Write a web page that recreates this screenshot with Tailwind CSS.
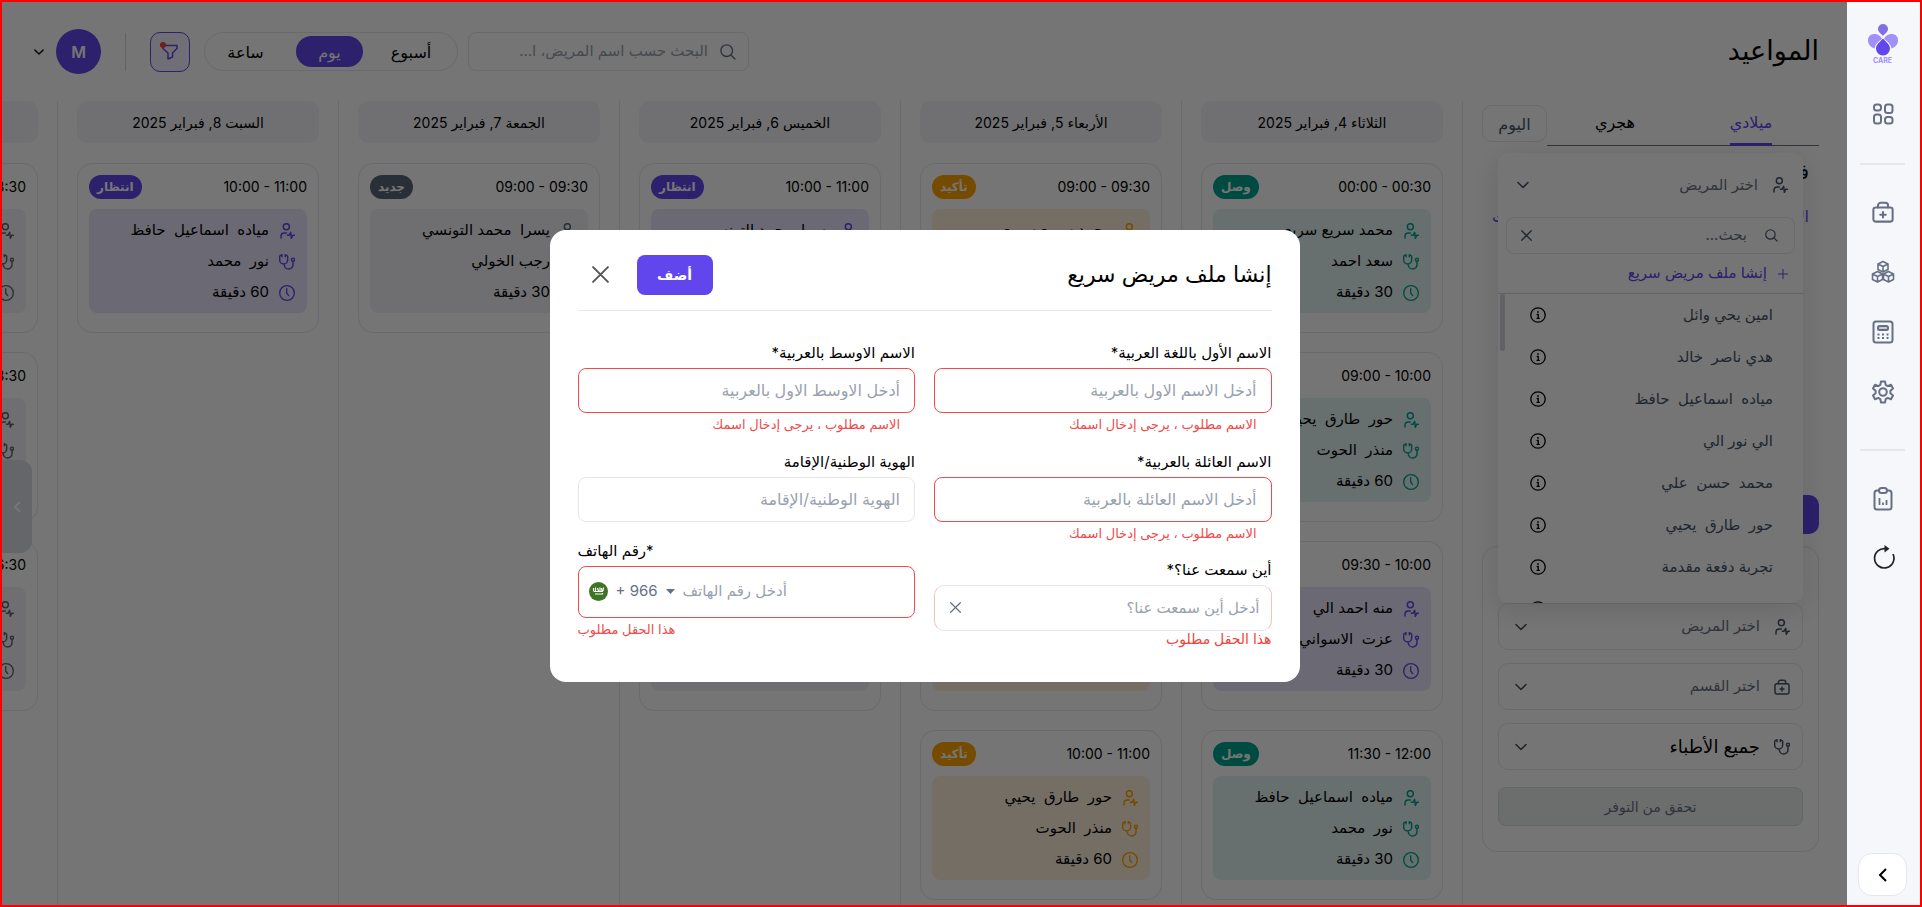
<!DOCTYPE html>
<html lang="ar" dir="rtl">
<head>
    <meta charset="UTF-8">
    <meta name="viewport" content="width=device-width, initial-scale=1.0">
    <title>المواعيد - CARE</title>
    <script src="https://cdn.jsdelivr.net/npm/@tailwindcss/browser@4"></script>
</head>
<body class="font-[Inter,'DejaVu_Sans',sans-serif] text-black">

    <!-- Icons -->
    <svg class="hidden">
        <symbol id="patient" viewBox="0 0 24 24" fill="none" stroke="currentColor" stroke-width="2.200" stroke-linecap="round" stroke-linejoin="round">
            <circle cx="11" cy="5.500" r="4.500"/><path d="M3 22.500V20a5 5 0 0 1 5-5h3"/><path d="M12.500 18.500h2.500l2.500-4.500 1 9 2-4.500H23"/>
        </symbol>
        <symbol id="doctor" viewBox="0 0 24 24" fill="none" stroke="currentColor" stroke-width="2.200" stroke-linecap="round" stroke-linejoin="round">
            <path d="M4.500 2H3a2 2 0 0 0-2 2v5a6 6 0 0 0 12 0V4a2 2 0 0 0-2-2H9.500M4.500 1v3M9.500 1v3M8 15v1a6.500 6.500 0 0 0 13 0v-4.500"/><circle cx="21" cy="8.500" r="2.300"/>
        </symbol>
        <symbol id="clock" viewBox="0 0 24 24" fill="none" stroke="currentColor" stroke-width="2" stroke-linecap="round" stroke-linejoin="round">
            <circle cx="12" cy="12" r="11"/><path d="M11.500 5.500V12l3 4"/>
        </symbol>
        <symbol id="bag" viewBox="0 0 24 24" fill="none" stroke="currentColor" stroke-width="2.200" stroke-linecap="round" stroke-linejoin="round">
            <rect x="1.500" y="7" width="21" height="15.500" rx="2.500"/><path d="M6.500 7V5a3 3 0 0 1 3-3h5a3 3 0 0 1 3 3v2M12 12v6M9 15h6"/>
        </symbol>
        <symbol id="chevron" viewBox="0 0 12 12" fill="none" stroke="currentColor" stroke-width="1.600" stroke-linecap="round" stroke-linejoin="round">
            <path d="M1 3.500l5 5 5-5"/>
        </symbol>
        <symbol id="search" viewBox="0 0 16 16" fill="none" stroke="currentColor" stroke-width="1.400" stroke-linecap="round">
            <circle cx="6.700" cy="6.700" r="5.800"/><path d="M10.900 10.900L15 15"/>
        </symbol>
        <symbol id="close" viewBox="0 0 16 16" fill="none" stroke="currentColor" stroke-width="1.800" stroke-linecap="round">
            <path d="M1 1l14 14M15 1L1 15"/>
        </symbol>
        <symbol id="info" viewBox="0 0 16 16" fill="none" stroke="currentColor" stroke-width="1.300" stroke-linecap="round">
            <circle cx="8" cy="8" r="7.200"/><path d="M7.200 7.500h1v3.700M7 11.300h2.300"/><circle cx="8" cy="4.900" r=".3" fill="currentColor"/>
        </symbol>
    </svg>

    <div class="flex h-screen overflow-hidden border-2 border-[#ff0000] bg-white">

        <!-- Sidebar -->
        <aside class="flex w-[73px] shrink-0 flex-col items-center bg-[#f6f7fb] pr-[2px] text-[#667085]">
            <a href="#" aria-label="CARE" class="mt-[22px] flex flex-col items-center">
                <svg class="h-8 w-[30px]" viewBox="0 0 30 32">
                    <path d="M14 15C11.500 8.500 0 8 0 16.500c0 4.500 3.500 7 6.500 8C7 20.500 10 17.500 14 15z" fill="#a18ffb"/>
                    <path d="M16 15c2.500-6.500 14-7 14 1.500 0 4.500-3.500 7-6.500 8C23 20.500 20 17.500 16 15z" fill="#a18ffb"/>
                    <path d="M15 12c-2-2.500-5-4-5-7a5 5 0 0 1 10 0c0 3-3 4.500-5 7z" fill="#8270e2"/>
                    <path d="M15 14.500c-3 3.500-7 6-7 10a7 7 0 0 0 14 0c0-4-4-6.500-7-10z" fill="#6246ed"/>
                </svg>
                <span class="text-[7px] leading-[9px] font-bold text-[#a18ffb]">CARE</span>
            </a>
            <nav class="mt-[37px] flex flex-col items-center" aria-label="القائمة">
                <a href="#" aria-label="الرئيسية">
                    <svg class="size-6" viewBox="0 0 24 24" fill="none" stroke="currentColor" stroke-width="2"><rect x="3" y="2.500" width="7" height="6" rx="2.500"/><rect x="14" y="2.500" width="7.500" height="8.500" rx="2.500"/><rect x="3" y="12.500" width="7" height="9" rx="2.500"/><rect x="14" y="15" width="7.500" height="6.500" rx="2.500"/></svg>
                </a>
                <hr class="mt-[37px] mb-9 w-[45px] border-t-2 border-gray-200">
                <a href="#" aria-label="العيادات"><svg class="size-[22px]"><use href="#bag"/></svg></a>
                <a href="#" aria-label="المخزون" class="mt-[37px]">
                    <svg class="size-6" viewBox="0 0 24 24" fill="none" stroke="currentColor" stroke-width="1.600" stroke-linejoin="round"><path d="M12 1.500l5 2.500v5.500l-5 2.500-5-2.500V4zM7 4l5 2.500L17 4M12 6.500V12M6.500 11.500l5 2.500v5.500l-5 2.500-5-2.500V14zM1.500 14l5 2.500 5-2.500M6.500 16.500V22M17.500 11.500l5 2.500v5.500l-5 2.500-5-2.500V14zM12.500 14l5 2.500 5-2.500M17.500 16.500V22"/></svg>
                </a>
                <a href="#" aria-label="المحاسبة" class="mt-9">
                    <svg class="size-6" viewBox="0 0 24 24" fill="none" stroke="currentColor" stroke-width="2"><rect x="2.500" y="1.500" width="19" height="21" rx="2.500"/><rect x="7" y="6" width="10" height="4" rx="1.500" fill="#c3c8d2"/><path d="M6.500 14.500h2M11 14.500h2M15.500 14.500h2M6.500 18h2M11 18h2M15.500 18h2"/></svg>
                </a>
                <a href="#" aria-label="الإعدادات" class="mt-9">
                    <svg class="size-6" viewBox="0 0 24 24" fill="none" stroke="currentColor" stroke-width="2" stroke-linejoin="round"><path d="M10 1.500h4l.7 3.400 2 1.200 3.300-1.300 2 3.600-2.600 2.300v2.600l2.600 2.300-2 3.600-3.300-1.300-2 1.200-.7 3.400h-4l-.7-3.400-2-1.200L4 19.200l-2-3.600 2.600-2.300v-2.600L2 8.400l2-3.600 3.300 1.300 2-1.200z"/><circle cx="12" cy="12" r="3.800"/></svg>
                </a>
                <hr class="mt-[45px] mb-9 w-[45px] border-t-2 border-gray-200">
                <a href="#" aria-label="التقارير">
                    <svg class="size-6" viewBox="0 0 24 24" fill="none" stroke="currentColor" stroke-width="2" stroke-linejoin="round"><path d="M8 3.500H6a2.500 2.500 0 0 0-2.500 2.500v14A2.500 2.500 0 0 0 6 22.500h12a2.500 2.500 0 0 0 2.500-2.500V6A2.500 2.500 0 0 0 18 3.500h-2"/><rect x="8" y="1" width="8" height="5" rx="2.500"/><path d="M8.500 11v7M12 15.500V18M15.500 13v5" stroke-width="1.800"/></svg>
                </a>
                <button type="button" aria-label="تحديث" class="mt-[34px] text-[#222]">
                    <svg class="size-6" viewBox="0 0 24 24" fill="none" stroke="currentColor" stroke-width="1.700"><path d="M15 3.700A9.700 9.700 0 1 0 22 9"/><path d="M13.500 0l5 3.700-5 3.800z" fill="currentColor" stroke="none"/></svg>
                </button>
            </nav>
            <button type="button" aria-label="توسيع القائمة" class="mt-auto mb-[9px] flex h-[43px] w-[49px] items-center justify-center rounded-[14px] border border-gray-200 bg-white text-black">
                <svg class="size-4" viewBox="0 0 16 16" fill="none" stroke="currentColor" stroke-width="2"><path d="M11 2L5 8l6 6"/></svg>
            </button>
        </aside>

        <main class="relative flex min-w-0 flex-1 flex-col overflow-hidden">

            <!-- Header -->
            <header class="flex h-[99px] shrink-0 items-center justify-between ps-7 pe-8">
                <h1 class="text-[27px]">المواعيد</h1>
                <div class="flex items-center">
                    <label class="flex h-[39px] w-[281px] items-center gap-3 rounded-lg border border-gray-200 px-3 text-[#667085]">
                        <svg class="size-4 shrink-0"><use href="#search"/></svg>
                        <input type="search" aria-label="بحث" placeholder="البحث حسب اسم المريض، اسم الطبيب" class="w-[212px] text-[15px] text-ellipsis outline-none placeholder:text-gray-400">
                    </label>
                    <div class="ms-[10px] flex h-[39px] w-[254px] items-center gap-[6px] rounded-full border border-gray-200 px-1 text-base">
                        <button type="button" class="w-[84px]">أسبوع</button>
                        <button type="button" class="h-[31px] w-[67px] rounded-full bg-[#6246ed] font-medium text-white">يوم</button>
                        <button type="button" class="flex-1 ps-2">ساعة</button>
                    </div>
                    <button type="button" aria-label="تصفية" class="relative ms-[14px] flex size-10 items-center justify-center rounded-[10px] border border-[#6246ed] bg-[#f4f2ff] text-[#6246ed]">
                        <svg class="size-4" viewBox="0 0 16 16" fill="none" stroke="currentColor" stroke-width="1.500" stroke-linejoin="round"><path d="M1 1.500h14v3L10.500 9v4L6 15V9L1 4.500z"/></svg>
                        <span class="absolute top-[9px] left-[9px] size-[6px] rounded-full bg-[#f04438]"></span>
                    </button>
                    <span class="mx-6 h-[38px] w-px bg-gray-300"></span>
                    <button type="button" class="flex items-center gap-3" aria-label="الحساب">
                        <span class="flex size-[45px] items-center justify-center rounded-full bg-[#6246ed] font-semibold text-white">M</span>
                        <svg class="size-[10px]"><use href="#chevron"/></svg>
                    </button>
                </div>
            </header>

            <div class="flex min-h-0 flex-1">

                <!-- Calendar and availability panel -->
                <section class="relative ms-7 me-[19px] w-[337px] shrink-0">
                    <div class="flex">
                        <div class="flex h-[45px] flex-1 border-b border-gray-500 text-base">
                            <button type="button" class="flex flex-1 justify-center text-[#6246ed]"><span class="flex h-[45px] items-center border-b-[3px] border-[#6246ed]">ميلادي</span></button>
                            <button type="button" class="flex-1 pb-[2px]">هجري</button>
                        </div>
                        <button type="button" class="mt-1 h-[37px] w-[65px] rounded-[10px] border border-gray-200 text-base text-[#475467]">اليوم</button>
                    </div>
                    <div class="h-[349px] px-[10px] pt-3">
                        <p class="text-xl leading-7">فبراير 2025</p>
                        <div class="mt-[18px] flex justify-between text-base text-[#6246ed]">
                            <span>الأحد</span><span>الاثنين</span><span>الثلاثاء</span><span>الأربعاء</span><span>الخميس</span><span>السبت</span>
                        </div>
                    </div>
                    <button type="button" class="block h-[39px] w-40 rounded-[10px] bg-[#6246ed] text-white">إضافة موعد</button>

                    <div class="mt-3 flex h-[306px] flex-col gap-[13px] rounded-[15px] border border-gray-200 px-[15px] pt-14">
                        <div class="relative flex h-[47px] shrink-0 items-center rounded-[10px] border border-gray-200 px-3">
                            <svg class="size-4 text-[#475467]"><use href="#patient"/></svg>
                            <select aria-label="المريض" class="h-full flex-1 appearance-none ps-[14px] text-[15px] text-gray-500 outline-none"><option>اختر المريض</option></select>
                            <svg class="pointer-events-none absolute left-4 size-3 text-[#475467]"><use href="#chevron"/></svg>
                        </div>
                        <div class="relative flex h-[47px] shrink-0 items-center rounded-[10px] border border-gray-200 px-3">
                            <svg class="size-4 text-[#475467]"><use href="#bag"/></svg>
                            <select aria-label="القسم" class="h-full flex-1 appearance-none ps-[14px] text-[15px] text-gray-500 outline-none"><option>اختر القسم</option></select>
                            <svg class="pointer-events-none absolute left-4 size-3 text-[#475467]"><use href="#chevron"/></svg>
                        </div>
                        <div class="relative flex h-[47px] shrink-0 items-center rounded-[10px] border border-gray-200 px-3">
                            <svg class="size-4 text-[#475467]"><use href="#doctor"/></svg>
                            <select aria-label="الطبيب" class="h-full flex-1 appearance-none ps-[14px] text-lg outline-none"><option>جميع الأطباء</option></select>
                            <svg class="pointer-events-none absolute left-4 size-3 text-[#475467]"><use href="#chevron"/></svg>
                        </div>
                        <button type="button" disabled class="mt-1 h-[39px] shrink-0 rounded-lg border border-[#d6dedc] bg-[#eaf0ee] text-sm text-[#667085]">تحقق من التوفر</button>
                    </div>

                    <!-- Patient dropdown -->
                    <div class="absolute top-[52px] right-4 left-4 h-[450px] overflow-hidden rounded-[10px] bg-white shadow-[0_6px_30px_rgba(0,0,0,0.12)]">
                        <button type="button" class="flex h-16 w-full items-center ps-[15px] pe-[19px] text-[15px] text-gray-500">
                            <svg class="size-4 text-[#475467]"><use href="#patient"/></svg>
                            <span class="ms-[14px]">اختر المريض</span>
                            <svg class="ms-auto size-3 text-[#475467]"><use href="#chevron"/></svg>
                        </button>
                        <label class="mx-2 flex h-[37px] items-center rounded-lg border border-gray-200 ps-4 pe-[14px] text-[#475467]">
                            <svg class="size-[13px]"><use href="#search"/></svg>
                            <input type="text" aria-label="بحث عن مريض" placeholder="بحث..." class="ms-[18px] min-w-0 flex-1 text-[15px] outline-none placeholder:text-gray-500">
                            <svg class="size-[11px] shrink-0"><use href="#close"/></svg>
                        </label>
                        <button type="button" class="flex h-10 w-full items-center gap-[11px] border-b border-gray-300 px-[15px] text-[15px] text-[#6246ed]">
                            <svg class="size-[10px]" viewBox="0 0 10 10" stroke="currentColor"><path d="M5 0v10M0 5h10"/></svg>
                            إنشا ملف مريض سريع
                        </button>
                        <div class="relative">
                            <span class="absolute top-0 left-[2px] h-[57px] w-[5px] rounded bg-gray-300"></span>
                            <ul id="patients" class="ps-[30px] pe-8 text-[15px] text-[#475467]"></ul>
                        </div>
                    </div>
                </section>

                <!-- Days -->
                <div id="days" class="flex min-w-0 flex-1 overflow-hidden"></div>
            </div>

            <button type="button" aria-label="التالي" class="absolute top-[458px] left-0 flex h-[93px] w-[30px] items-center justify-center rounded-r-xl bg-[#d9dee4] text-white">
                <svg class="size-3" viewBox="0 0 12 12" fill="none" stroke="currentColor" stroke-width="2"><path d="M9 1L4 6l5 5"/></svg>
            </button>

            <!-- Quick patient modal -->
            <div class="absolute inset-0 flex items-center justify-center bg-black/54 pt-1">
                <form class="h-[452px] w-[750px] rounded-2xl bg-white px-7" onsubmit="return false">
                    <div class="flex h-[81px] items-center border-b border-gray-200 pt-[10px]">
                        <h2 class="text-[22px]">إنشا ملف مريض سريع</h2>
                        <button type="submit" class="ms-auto h-10 w-[76px] rounded-lg bg-[#6246ed] text-sm font-bold text-white">أضف</button>
                        <button type="button" aria-label="إغلاق" class="ms-7 me-[14px] text-[#555]"><svg class="size-[17px]"><use href="#close"/></svg></button>
                    </div>
                    <div class="mt-8 grid grid-cols-2 gap-x-[19px]">
                        <div>
                            <div class="h-[109px]">
                                <label for="first" class="block h-[25px] text-[15px] leading-5">الاسم الأول باللغة العربية*</label>
                                <input id="first" type="text" placeholder="أدخل الاسم الاول بالعربية" class="block h-[45px] w-full rounded-lg border border-[#f04a4a] px-[14px] text-base outline-none placeholder:text-gray-400">
                                <p class="px-[15px] text-[13px] leading-[22px] text-[#f04a4a]">الاسم مطلوب ، يرجى إدخال اسمك</p>
                            </div>
                            <div class="h-[108px]">
                                <label for="family" class="block h-[25px] text-[15px] leading-5">الاسم العائلة بالعربية*</label>
                                <input id="family" type="text" placeholder="أدخل الاسم العائلة بالعربية" class="block h-[45px] w-full rounded-lg border border-[#f04a4a] px-[14px] text-base outline-none placeholder:text-gray-400">
                                <p class="px-[15px] text-[13px] leading-[22px] text-[#f04a4a]">الاسم مطلوب ، يرجى إدخال اسمك</p>
                            </div>
                            <label for="source" class="block h-[25px] text-[15px] leading-5">أين سمعت عنا؟*</label>
                            <div class="relative flex h-[46px] items-center">
                                <input id="source" type="text" placeholder="أدخل أين سمعت عنا؟" class="h-full w-full rounded-[10px] border border-x-[#f0c4c4] border-y-gray-200 px-[11px] text-[15px] outline-none placeholder:text-gray-400">
                                <button type="button" aria-label="مسح" class="absolute left-4 text-[#667085]"><svg class="size-[11px]"><use href="#close"/></svg></button>
                            </div>
                            <p class="text-sm leading-4 text-[#f04438]">هذا الحقل مطلوب</p>
                        </div>
                        <div>
                            <div class="h-[109px]">
                                <label for="middle" class="block h-[25px] text-[15px] leading-5">الاسم الاوسط بالعربية*</label>
                                <input id="middle" type="text" placeholder="أدخل الاوسط الاول بالعربية" class="block h-[45px] w-full rounded-lg border border-[#f04a4a] px-[14px] text-base outline-none placeholder:text-gray-400">
                                <p class="px-[15px] text-[13px] leading-[22px] text-[#f04a4a]">الاسم مطلوب ، يرجى إدخال اسمك</p>
                            </div>
                            <div class="h-[89px]">
                                <label for="national" class="block h-[25px] text-[15px] leading-5">الهوية الوطنية/الإقامة</label>
                                <input id="national" type="text" placeholder="الهوية الوطنية/الإقامة" class="block h-[45px] w-full rounded-lg border border-gray-200 px-[14px] text-base outline-none placeholder:text-gray-400">
                            </div>
                            <div dir="ltr">
                                <label for="phone" class="block h-[25px] text-[15px] leading-5"><bdi dir="rtl">رقم الهاتف</bdi>*</label>
                                <div class="flex h-[52px] items-center rounded-lg border border-[#f04a4a] px-[10px] text-[15px] text-[#667085]">
                                    <button type="button" class="flex shrink-0 items-center gap-2">
                                        <svg class="size-[19px]" viewBox="0 0 19 19"><circle cx="9.500" cy="9.500" r="9.500" fill="#3f7424"/><path d="M4.500 6v3M6.500 5.500v3.500M8.500 6l1 3M11 5.500v3.500M12.500 6l.5 3M14.500 5.500L14 9M4.500 9.500h9.500M6 12h7.500v-1" fill="none" stroke="#fff" stroke-width="1.200"/></svg>
                                        <span>+ 966</span>
                                        <svg class="h-[5px] w-[9px]" viewBox="0 0 9 5"><path d="M0 0h9L4.500 5z" fill="currentColor"/></svg>
                                    </button>
                                    <input id="phone" type="tel" placeholder="أدخل رقم الهاتف" class="ms-2 min-w-0 flex-1 text-[15px] outline-none placeholder:text-gray-400">
                                </div>
                                <p class="text-[13px] leading-[22px] text-[#f04a4a]">هذا الحقل مطلوب</p>
                            </div>
                        </div>
                    </div>
                </form>
            </div>
        </main>
    </div>

    <script>
        const patients = ['امين يحي وائل', 'هدي ناصر &nbsp;خالد', 'مياده &nbsp;اسماعيل &nbsp;حافظ', 'الي نور الي', 'محمد &nbsp;حسن &nbsp;علي', 'حور &nbsp;طارق &nbsp;يحيي', 'تجربة دفعة مقدمة', 'سعد احمد'];
        document.getElementById('patients').innerHTML = patients.map(name => `
            <li class="flex h-[42px] items-center justify-between">
                <span>${name}</span>
                <button type="button" aria-label="معلومات" class="text-black"><svg class="size-4"><use href="#info"/></svg></button>
            </li>`).join('');

        const status = {
            arrived: { label: 'وصل', badge: 'bg-[#00a38f]', box: 'bg-[#e0f3f1]', icon: 'text-[#00a38f]' },
            waiting: { label: 'انتظار', badge: 'bg-[#6246ed]', box: 'bg-[#e9e4fc]', icon: 'text-[#6246ed]' },
            confirmed: { label: 'تأكيد', badge: 'bg-[#ffa300]', box: 'bg-[#fff0dd]', icon: 'text-[#ffa300]' },
            fresh: { label: 'جديد', badge: 'bg-[#5a6878]', box: 'bg-[#f2f2f8]', icon: 'text-[#5a6878]' }
        };

        const days = [
            { title: 'الثلاثاء 4, فبراير 2025', items: [
                ['arrived', '00:00 - 00:30', 'محمد سريع سريع', 'سعد احمد', 30],
                ['arrived', '09:00 - 10:00', 'حور &nbsp;طارق &nbsp;يحيي', 'منذر &nbsp;الحوت', 60],
                ['waiting', '09:30 - 10:00', 'منه احمد الي', 'عزت &nbsp;الاسواني', 30],
                ['arrived', '11:30 - 12:00', 'مياده &nbsp;اسماعيل &nbsp;حافظ', 'نور &nbsp;محمد', 30]
            ] },
            { title: 'الأربعاء 5, فبراير 2025', items: [
                ['confirmed', '09:00 - 09:30', 'محمد سريع سريع', 'سعد احمد', 30],
                ['confirmed', '09:00 - 10:00', 'حور &nbsp;طارق &nbsp;يحيي', 'منذر &nbsp;الحوت', 60],
                ['confirmed', '09:30 - 10:00', 'منه احمد الي', 'نور &nbsp;محمد', 30],
                ['confirmed', '10:00 - 11:00', 'حور &nbsp;طارق &nbsp;يحيي', 'منذر &nbsp;الحوت', 60]
            ] },
            { title: 'الخميس 6, فبراير 2025', items: [
                ['waiting', '10:00 - 11:00', 'يسرا &nbsp;محمد التونسي', 'رجب الخولي', 60],
                ['waiting', '11:00 - 11:30', 'منه احمد الي', 'نور &nbsp;محمد', 30],
                ['fresh', '11:30 - 12:00', 'هدي ناصر &nbsp;خالد', 'سعد احمد', 30]
            ] },
            { title: 'الجمعة 7, فبراير 2025', items: [
                ['fresh', '09:00 - 09:30', 'يسرا &nbsp;محمد التونسي', 'رجب الخولي', 30]
            ] },
            { title: 'السبت 8, فبراير 2025', items: [
                ['waiting', '10:00 - 11:00', 'مياده &nbsp;اسماعيل &nbsp;حافظ', 'نور &nbsp;محمد', 60]
            ] },
            { title: 'الأحد 9, فبراير 2025', items: [
                ['fresh', '08:00 - 08:30', 'الي نور الي', 'سعد احمد', 30],
                ['fresh', '08:00 - 08:30', 'امين يحي وائل', 'نور &nbsp;محمد', 30],
                ['fresh', '16:00 - 16:30', 'هدي ناصر &nbsp;خالد', 'سعد احمد', 30]
            ] }
        ];

        function card([key, time, patient, doctor, minutes]) {
            const s = status[key];
            const row = (icon, text) => `
                <p class="flex h-[31px] items-center gap-[10px]">
                    <svg class="size-4 shrink-0 ${s.icon}"><use href="#${icon}"/></svg>${text}
                </p>`;
            return `
                <article class="mb-[19px] h-[170px] rounded-[15px] border border-gray-200 px-[11px] pt-[11px]">
                    <div class="flex h-6 items-center justify-between">
                        <time dir="ltr" class="text-sm">${time}</time>
                        <span class="flex h-6 items-center rounded-full px-2 text-xs font-bold text-white ${s.badge}">${s.label}</span>
                    </div>
                    <div class="mt-[10px] rounded-lg px-3 pt-[6px] pb-[5px] text-[15px] ${s.box}">
                        ${row('patient', patient)}${row('doctor', doctor)}${row('clock', minutes + ' دقيقة')}
                    </div>
                </article>`;
        }

        document.getElementById('days').innerHTML = days.map(day => `
            <section class="w-[281px] shrink-0 border-r border-gray-200 px-[19px]">
                <h3 class="mb-5 flex h-[42px] items-center justify-center rounded-[10px] bg-[#f5f5fa] pt-[2px] text-sm">${day.title}</h3>
                ${day.items.map(card).join('')}
            </section>`).join('');
    </script>
</body>
</html>
